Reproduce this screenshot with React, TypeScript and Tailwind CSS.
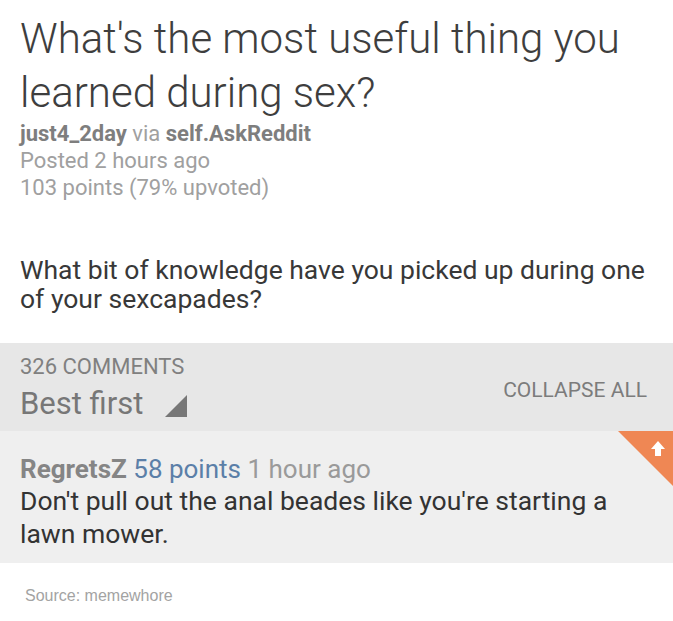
export default function App() {
  return (
    <div className="h-[621px] w-[673px] overflow-hidden bg-white font-['Roboto',sans-serif]">
      <div className="px-5 pb-[30px] pt-[12px]">
        <h1 className="text-[42px] font-light leading-[54px] text-[#3e3e3e]">
          What's the most useful thing you
          <br />
          learned during sex?
        </h1>
        <div className="text-[22px] leading-[27px] text-[#a0a0a0]">
          <p>
            <span className="font-bold text-[#7e7e7e]">just4_2day</span> via{' '}
            <span className="font-bold text-[#7e7e7e]">self.AskReddit</span>
          </p>
          <p>Posted 2 hours ago</p>
          <p>103 points (79% upvoted)</p>
        </div>
        <p className="mt-[54px] text-[26.5px] leading-[29px] text-[#383838]">
          What bit of knowledge have you picked up during one
          <br />
          of your sexcapades?
        </p>
      </div>

      <div className="flex h-[88px] justify-between bg-[#e7e7e7] pl-5 pr-[26px] pt-[11px]">
        <div>
          <p className="text-[22px] leading-[26px] text-[#808080]">326 COMMENTS</p>
          <div className="mt-[6px] flex">
            <span className="text-[31px] leading-[36px] text-[#777777]">Best first</span>
            <svg viewBox="0 0 22 22" className="mb-[5px] ml-[22px] h-[22px] w-[22px] self-end">
              <polygon points="22,0 22,22 0,22" fill="#777777" />
            </svg>
          </div>
        </div>
        <p className="mt-[24px] text-[21px] leading-[24px] text-[#7c7c7c]">COLLAPSE ALL</p>
      </div>

      <div className="relative h-[132px] bg-[#efefef] px-5 pt-[23px]">
        <svg viewBox="0 0 55 55" className="absolute right-0 top-0 h-[55px] w-[55px]">
          <polygon points="0,0 55,0 55,55" fill="#ef8754" />
          <polygon points="33,18 40,10 47,18" fill="#ffffff" />
          <rect x="37" y="17" width="6" height="8" fill="#ffffff" />
        </svg>
        <p className="text-[26px] leading-[30px]">
          <span className="font-bold text-[#858585]">RegretsZ</span>{' '}
          <span className="text-[#5b7fa8]">58 points</span>{' '}
          <span className="text-[#9a9a9a]">1 hour ago</span>
        </p>
        <p className="text-[26.5px] leading-[33px] text-[#333333]">
          Don't pull out the anal beades like you're starting a
          <br />
          lawn mower.
        </p>
      </div>

      <div className="pl-[25px] pt-[23px]">
        <p className="font-['Liberation_Sans',sans-serif] text-[16px] leading-[20px] text-[#a3a3a3]">
          Source: memewhore
        </p>
      </div>
    </div>
  );
}
